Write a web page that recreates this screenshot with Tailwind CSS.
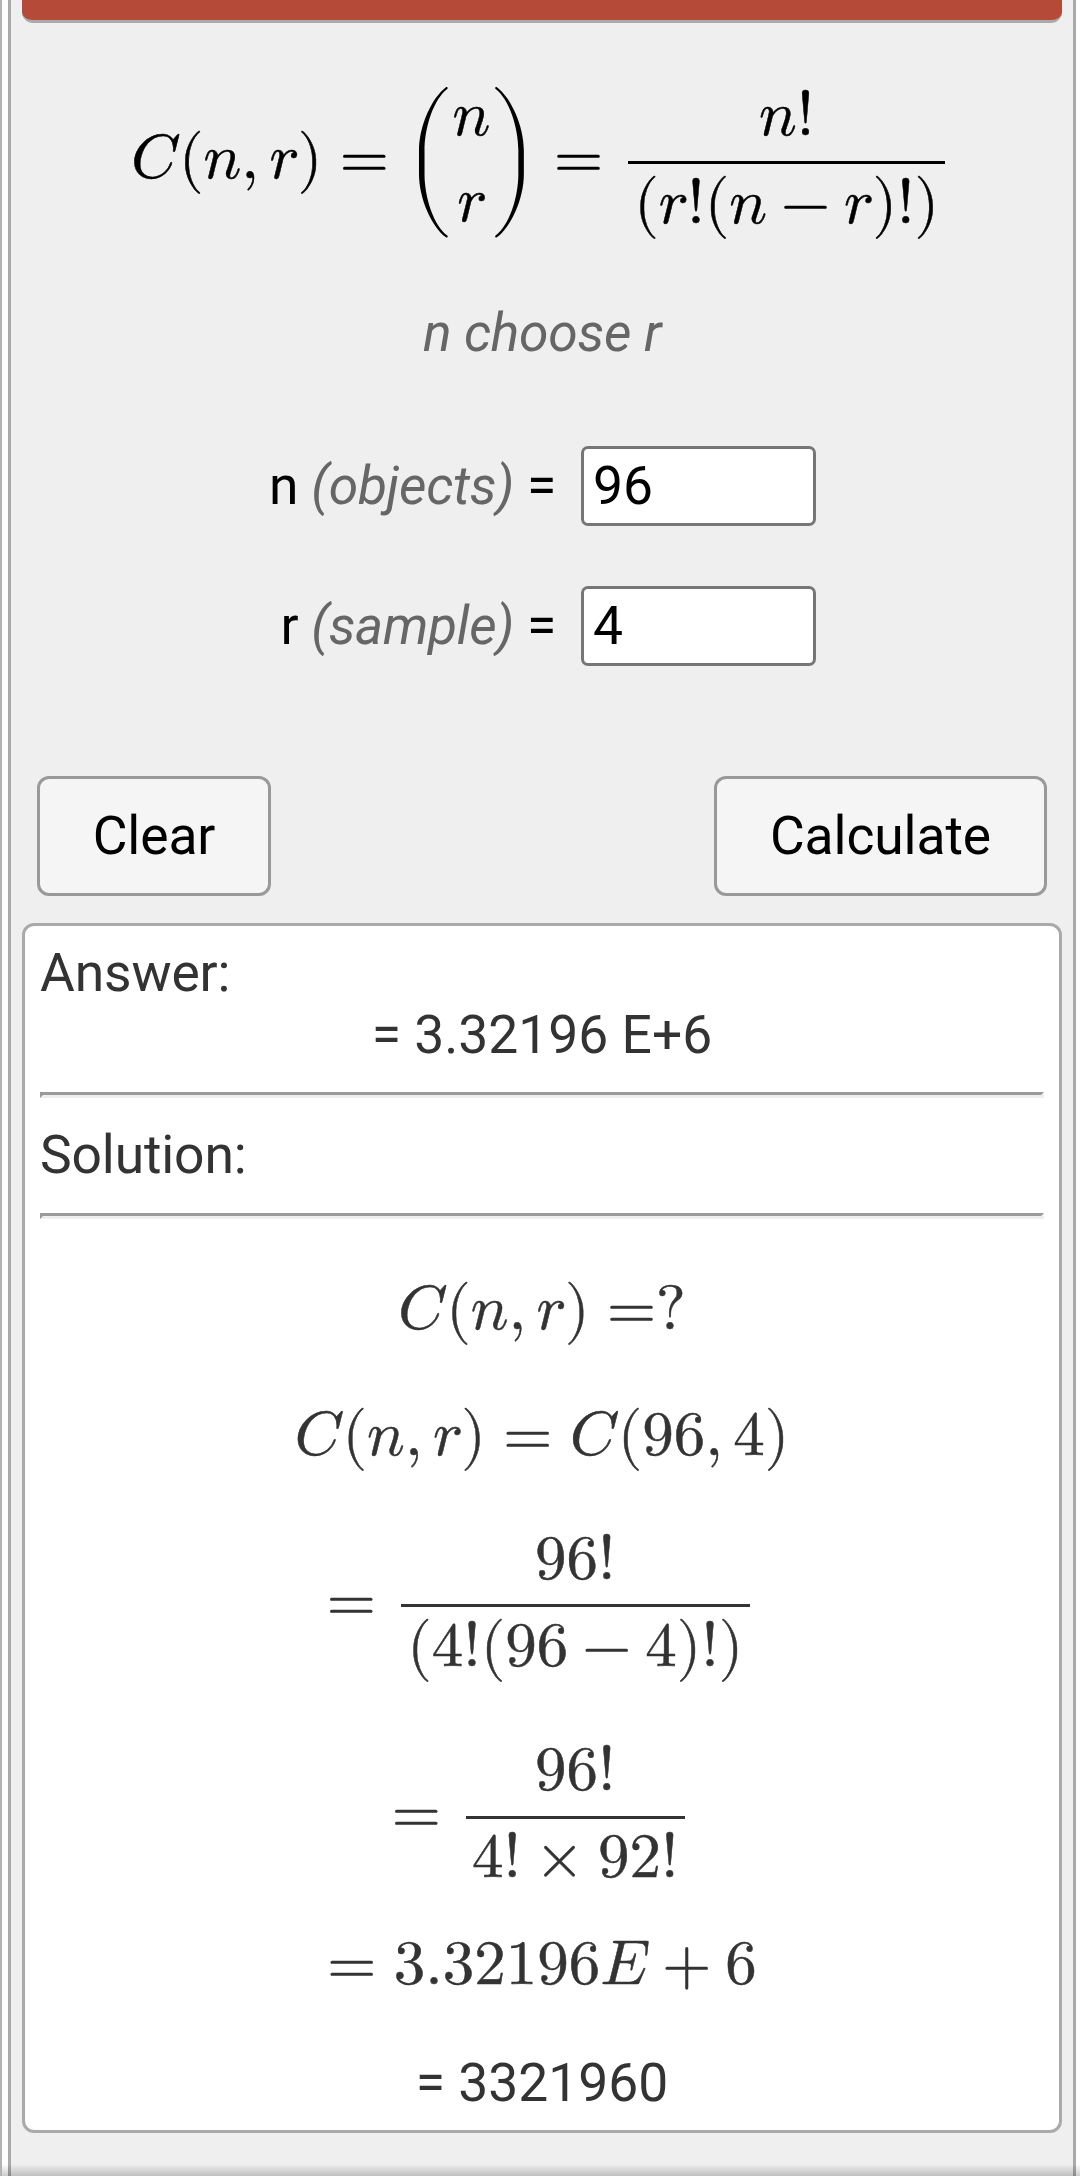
<!DOCTYPE html>
<html lang="en"><head><meta charset="utf-8"><title>Combinations Calculator</title><script src="https://cdn.jsdelivr.net/npm/@tailwindcss/browser@4"></script></head>
<body class="bg-white font-[Roboto,sans-serif] text-[53.4px] leading-[62px] text-black">
<div class="relative flex h-[2176px] w-[1080px] overflow-hidden border-l-2 border-[#b3b3b3] pl-[6px]">
<main class="flex h-full w-[1068px] flex-col border-x-[3px] border-[#aaaaaa] bg-[#efefef] px-[11px]">
<div class="h-[23px] shrink-0 rounded-b-[11px] border-b-[3px] border-[#aaaaaa] bg-[#b54a38]"></div>

<!-- Formula -->
<div class="mt-[59px] flex h-[160px] items-center justify-center whitespace-nowrap">
<math class="font-['Latin_Modern_Math','Liberation_Serif',serif] text-[63px] [-webkit-text-stroke:0.5px]" display="block"><mi>C</mi><mspace width="0.045em"></mspace><mo stretchy="false" lspace="0" rspace="0">(</mo><mi>n</mi><mo lspace="0" rspace="0.167em">,</mo><mi>r</mi><mo stretchy="false" lspace="0" rspace="0">)</mo><mo>=</mo><mrow><mo class="-mr-[3px] -ml-[6px]" minsize="2.4em" lspace="0" rspace="0">(</mo><mfrac linethickness="0"><mi>n</mi><mi>r</mi></mfrac><mo class="-mr-[6px] -ml-[3px]" minsize="2.4em" lspace="0" rspace="0">)</mo></mrow><mo>=</mo><mspace width="0.12em"></mspace><mfrac linethickness="3px"><mrow><mi>n</mi><mo lspace="0" rspace="0">!</mo></mrow><mrow class="translate-y-[2px]"><mspace width="0.1em"></mspace><mo stretchy="false" lspace="0" rspace="0">(</mo><mi>r</mi><mo lspace="0" rspace="0">!</mo><mo stretchy="false" lspace="0" rspace="0">(</mo><mi>n</mi><mo>−</mo><mi>r</mi><mo stretchy="false" lspace="0" rspace="0">)</mo><mo lspace="0" rspace="0">!</mo><mo stretchy="false" lspace="0" rspace="0">)</mo><mspace width="0.1em"></mspace></mrow></mfrac><mspace width="0.12em"></mspace></math>
</div>
<p class="mt-[60px] text-center tracking-[-0.3px] text-[#666666] italic">n choose r</p>

<!-- Inputs -->
<div class="mt-[82px] flex h-[80px] items-center"><label class="w-[534px] text-right tracking-[-0.25px]">n <i class="text-[#666666]">(objects)</i> =</label><input class="ml-[25px] h-[80px] w-[235px] rounded-[7px] border-[3px] border-[#767676] bg-white px-[9px] pb-[2px]" value="96"></div>
<div class="mt-[60px] flex h-[80px] items-center"><label class="w-[534px] text-right tracking-[-0.3px]">r <i class="text-[#666666]">(sample)</i> =</label><input class="ml-[25px] h-[80px] w-[235px] rounded-[7px] border-[3px] border-[#767676] bg-white px-[9px] pb-[2px]" value="4"></div>
<div class="mt-[110px] flex justify-between px-[15px]"><button class="h-[120px] w-[234px] rounded-[12px] border-[3px] border-[#999999] bg-[#f5f5f5] tracking-[-0.1px]">Clear</button><button class="h-[120px] w-[333px] rounded-[12px] border-[3px] border-[#999999] bg-[#f5f5f5] tracking-[-0.1px]">Calculate</button></div>

<!-- Answer and solution -->
<section class="mt-[27px] h-[1210px] rounded-[12px] border-[3px] border-[#aaaaaa] bg-white px-[15px] pt-[16px] text-[#333333]">
<p class="tracking-[-0.15px]">Answer:</p><p class="text-center">= 3.32196 E+6</p>
<hr class="mt-[26px] border-[3px] border-t-[#9a9a9a] border-r-[#eeeeee] border-b-[#eeeeee] border-l-[#9a9a9a]">
<p class="mt-[26px] tracking-[-0.15px]">Solution:</p>
<hr class="mt-[27px] border-[3px] border-t-[#9a9a9a] border-r-[#eeeeee] border-b-[#eeeeee] border-l-[#9a9a9a]">
<div class="mt-[54px] flex h-[80px] items-center justify-center whitespace-nowrap">
<math class="font-['Latin_Modern_Math','Liberation_Serif',serif] text-[63px] [-webkit-text-stroke:0.5px]" display="block"><mi>C</mi><mspace width="0.045em"></mspace><mo stretchy="false" lspace="0" rspace="0">(</mo><mi>n</mi><mo lspace="0" rspace="0.167em">,</mo><mi>r</mi><mo stretchy="false" lspace="0" rspace="0">)</mo><mo rspace="0">=</mo><mo lspace="0" rspace="0">?</mo></math></div>
<div class="mt-[46px] flex h-[80px] items-center justify-center whitespace-nowrap">
<math class="font-['Latin_Modern_Math','Liberation_Serif',serif] text-[63px] [-webkit-text-stroke:0.5px]" display="block"><mi>C</mi><mspace width="0.045em"></mspace><mo stretchy="false" lspace="0" rspace="0">(</mo><mi>n</mi><mo lspace="0" rspace="0.167em">,</mo><mi>r</mi><mo stretchy="false" lspace="0" rspace="0">)</mo><mo>=</mo><mi>C</mi><mspace width="0.045em"></mspace><mo stretchy="false" lspace="0" rspace="0">(</mo><mn>96</mn><mo lspace="0" rspace="0.167em">,</mo><mn>4</mn><mo stretchy="false" lspace="0" rspace="0">)</mo></math></div>
<div class="mt-[48px] flex h-[160px] items-center justify-center whitespace-nowrap">
<math class="font-['Latin_Modern_Math','Liberation_Serif',serif] text-[63px] [-webkit-text-stroke:0.5px]" display="block"><mo lspace="0">=</mo><mspace width="0.12em"></mspace><mfrac linethickness="3px"><mrow><mn>96</mn><mo lspace="0" rspace="0">!</mo></mrow><mrow class="translate-y-[2px]"><mspace width="0.1em"></mspace><mo stretchy="false" lspace="0" rspace="0">(</mo><mn>4</mn><mo lspace="0" rspace="0">!</mo><mo stretchy="false" lspace="0" rspace="0">(</mo><mn>96</mn><mo>−</mo><mn>4</mn><mo stretchy="false" lspace="0" rspace="0">)</mo><mo lspace="0" rspace="0">!</mo><mo stretchy="false" lspace="0" rspace="0">)</mo><mspace width="0.1em"></mspace></mrow></mfrac><mspace width="0.12em"></mspace></math></div>
<div class="mt-[44px] flex h-[160px] items-center justify-center whitespace-nowrap">
<math class="font-['Latin_Modern_Math','Liberation_Serif',serif] text-[63px] [-webkit-text-stroke:0.5px]" display="block"><mo lspace="0">=</mo><mspace width="0.12em"></mspace><mfrac linethickness="3px"><mrow><mn>96</mn><mo lspace="0" rspace="0">!</mo></mrow><mrow class="translate-y-[1px]"><mspace width="0.1em"></mspace><mn>4</mn><mo lspace="0" rspace="0">!</mo><mo lspace="0.222em" rspace="0.222em">×</mo><mn>92</mn><mo lspace="0" rspace="0">!</mo><mspace width="0.1em"></mspace></mrow></mfrac><mspace width="0.12em"></mspace></math></div>
<div class="mt-[34px] flex h-[80px] items-center justify-center whitespace-nowrap">
<math class="font-['Latin_Modern_Math','Liberation_Serif',serif] text-[63px] [-webkit-text-stroke:0.5px]" display="block"><mo lspace="0">=</mo><mn>3.32196</mn><mi>E</mi><mspace width="0.026em"></mspace><mo>+</mo><mn>6</mn></math></div>
<p class="mt-[47px] text-center">= 3321960</p>
</section>
</main>
<div class="absolute right-0 bottom-0 -left-[2px] h-[12px] bg-linear-to-b from-black/0 to-black/20"></div>
</div>
</body></html>
